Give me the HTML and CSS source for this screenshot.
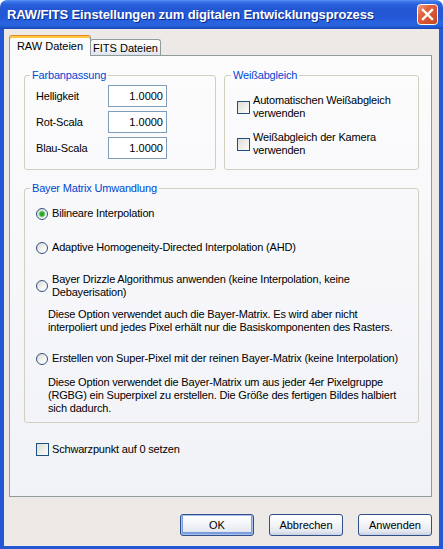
FILE: index.html
```html
<!DOCTYPE html>
<html lang="de">
<head>
<meta charset="utf-8">
<title>RAW/FITS Einstellungen</title>
<link rel="stylesheet" href="styles.css">
</head>
<body>
<div class="window">
  <div class="titlebar">
    <span class="title">RAW/FITS Einstellungen zum digitalen Entwicklungsprozess</span>
    <span class="close">
      <svg width="21" height="21" viewBox="0 0 21 21">
        <defs>
          <linearGradient id="cg" x1="0" y1="0" x2="1" y2="1">
            <stop offset="0" stop-color="#F0A58A"/>
            <stop offset="0.35" stop-color="#E2623F"/>
            <stop offset="1" stop-color="#C7431E"/>
          </linearGradient>
        </defs>
        <rect x="0.5" y="0.5" width="20" height="20" rx="3" fill="url(#cg)" stroke="#FFFFFF"/>
        <path d="M6 6 L15 15 M15 6 L6 15" stroke="#FFFFFF" stroke-width="2.4" stroke-linecap="square"/>
      </svg>
    </span>
  </div>
  <div class="frame">
    <div class="tabs">
      <div class="tab active">RAW Dateien</div>
      <div class="tab inactive">FITS Dateien</div>
    </div>
    <div class="panel">
      <div class="toprow">
        <fieldset class="group farb">
          <legend>Farbanpassung</legend>
          <div class="field"><span class="flabel">Helligkeit</span><span class="num">1.0000</span></div>
          <div class="field"><span class="flabel">Rot-Scala</span><span class="num">1.0000</span></div>
          <div class="field"><span class="flabel">Blau-Scala</span><span class="num">1.0000</span></div>
        </fieldset>
        <fieldset class="group weiss">
          <legend>Weißabgleich</legend>
          <div class="check"><span class="box"></span><span class="ctext">Automatischen Weißabgleich verwenden</span></div>
          <div class="check"><span class="box"></span><span class="ctext">Weißabgleich der Kamera verwenden</span></div>
        </fieldset>
      </div>
      <fieldset class="group bayer">
        <legend>Bayer Matrix Umwandlung</legend>
        <div class="radio r1"><span class="dot on"></span><span class="rtext">Bilineare Interpolation</span></div>
        <div class="radio r2"><span class="dot"></span><span class="rtext">Adaptive Homogeneity-Directed Interpolation (AHD)</span></div>
        <div class="radio r3"><span class="dot"></span><span class="rtext">Bayer Drizzle Algorithmus anwenden (keine Interpolation, keine Debayerisation)</span></div>
        <p class="desc d1">Diese Option verwendet auch die Bayer-Matrix. Es wird aber nicht interpoliert und jedes Pixel erhält nur die Basiskomponenten des Rasters.</p>
        <div class="radio r4"><span class="dot"></span><span class="rtext">Erstellen von Super-Pixel mit der reinen Bayer-Matrix (keine Interpolation)</span></div>
        <p class="desc d2">Diese Option verwendet die Bayer-Matrix um aus jeder 4er Pixelgruppe (RGBG) ein Superpixel zu erstellen. Die Größe des fertigen Bildes halbiert sich dadurch.</p>
      </fieldset>
      <div class="check schwarz"><span class="box"></span><span class="ctext">Schwarzpunkt auf 0 setzen</span></div>
    </div>
    <div class="buttons">
      <button class="btn default">OK</button>
      <button class="btn">Abbrechen</button>
      <button class="btn">Anwenden</button>
    </div>
  </div>
</div>
</body>
</html>
```
FILE: styles.css
```css
* { box-sizing: border-box; }
html, body { margin: 0; padding: 0; background: #ffffff; }
body {
  font-family: "Liberation Sans", Arial, sans-serif;
  font-size: 11px;
  letter-spacing: -0.18px;
  color: #000;
}
.window {
  width: 443px;
  height: 549px;
  display: flex;
  flex-direction: column;
  border-radius: 7px 7px 0 0;
  overflow: hidden;
}
.titlebar {
  height: 29px;
  flex: none;
  display: flex;
  align-items: center;
  justify-content: space-between;
  padding: 0 5px 0 7px;
  background: linear-gradient(to bottom, #5C92F2 0%, #3A76E8 6%, #2A62DC 14%, #2457D4 30%, #2358D6 60%, #2A64E0 80%, #2460DA 90%, #1B46B6 100%);
}
.title {
  color: #fff;
  font-weight: bold;
  font-size: 13px;
  letter-spacing: -0.13px;
  text-shadow: 1px 1px 0 #0C2A8C;
  white-space: nowrap;
}
.close { display: flex; width: 21px; height: 21px; }
.frame {
  flex: 1;
  display: flex;
  flex-direction: column;
  background: #ECE9E6;
  border: solid #2457D4;
  border-width: 0 4px 3px 4px;
  padding: 6px 7px 0 5px;
}
.tabs { display: flex; align-items: flex-end; height: 20px; }
.tab {
  border: 1px solid #919B9C;
  border-bottom: none;
  border-radius: 3px 3px 0 0;
  text-align: center;
  line-height: 14px;
  letter-spacing: 0;
}
.tab.active {
  width: 82px;
  height: 21px;
  margin-bottom: -1px;
  border-top: 1px solid #E68B2C;
  box-shadow: inset 0 2px 0 #FFC83C;
  padding-top: 3px;
  background: #FBFBFC;
  position: relative;
  z-index: 1;
}
.tab.inactive {
  width: 71px;
  height: 16px;
  margin-left: -1px;
  padding-top: 1px;
  background: linear-gradient(to bottom, #FFFFFF, #F5F5F4 55%, #DDE2EE);
}
.panel {
  height: 442px;
  border: 1px solid #919B9C;
  background: linear-gradient(to bottom, #FCFCFD, #F1F2F7);
  padding: 12px 12px 0 14px;
  display: flex;
  flex-direction: column;
}
.toprow { display: flex; gap: 8px; }
.group {
  margin: 0;
  min-width: 0;
  border: 1px solid #D0D0BF;
  border-radius: 3px;
}
legend {
  color: #0046D5;
  padding: 0 2px;
  margin-left: -6px;
  line-height: 14px;
  font-size: 11px;
}
.farb { width: 192px; padding: 3px 10px 10px 11px; }
.weiss { flex: 1; padding: 12px 8px 0 12px; }
.field { display: flex; align-items: center; height: 22px; }
.field + .field { margin-top: 4px; }
.flabel { width: 72px; }
.num {
  width: 59px;
  height: 22px;
  border: 1px solid #7F9DB9;
  background: #fff;
  text-align: right;
  padding-right: 3px;
  line-height: 20px;
  letter-spacing: 0;
}
.check { display: flex; align-items: center; }
.box {
  flex: none;
  width: 13px;
  height: 13px;
  border: 1px solid #1C5180;
  background: linear-gradient(135deg, #DCDCD5 0%, #EDEDE9 50%, #FBFBFA 100%);
  margin-right: 3px;
}
.ctext { line-height: 13px; }
.weiss .ctext { width: 160px; }
.weiss .check + .check { margin-top: 11px; }
.group.bayer { margin-top: 11px; padding: 12px 4px 7px 11px; }
.radio { display: flex; align-items: center; }
.dot {
  flex: none;
  width: 12px;
  height: 12px;
  border-radius: 50%;
  border: 1px solid #34507E;
  background: linear-gradient(135deg, #D6D6D0, #F6F6F4 60%, #FFFFFF);
  margin-right: 4px;
}
.dot.on {
  background: radial-gradient(circle at 50% 50%, #21A121 0, #2DB12D 2px, #9ED79E 3px, rgba(255,255,255,0) 4px), linear-gradient(135deg, #D6D6D0, #F6F6F4 60%, #FFFFFF);
}
.rtext { line-height: 13px; }
.r2 { margin-top: 21px; }
.r3 { margin-top: 19px; }
.r3 .rtext { width: 315px; }
.r4 { margin-top: 18px; }
.desc { margin: 0 0 0 12px; width: 356px; line-height: 13px; }
.d1 { margin-top: 9px; }
.d2 { margin-top: 11px; }
.schwarz { margin-top: 20px; margin-left: 12px; }
.buttons {
  display: flex;
  justify-content: flex-end;
  gap: 15px;
  margin-top: 17px;
}
.btn {
  width: 74px;
  height: 22px;
  font-family: "Liberation Sans", Arial, sans-serif;
  font-size: 11px;
  color: #000;
  border: 1px solid #2F4F86;
  border-radius: 3px;
  background: linear-gradient(to bottom, #FFFFFF, #F5F6F9 40%, #E6E9F1 80%, #C8D0E2);
  padding: 0;
}
.btn.default { box-shadow: inset 0 0 0 1px #A9C0EC, inset 0 -1px 0 2px #7C9CE0; }
```
